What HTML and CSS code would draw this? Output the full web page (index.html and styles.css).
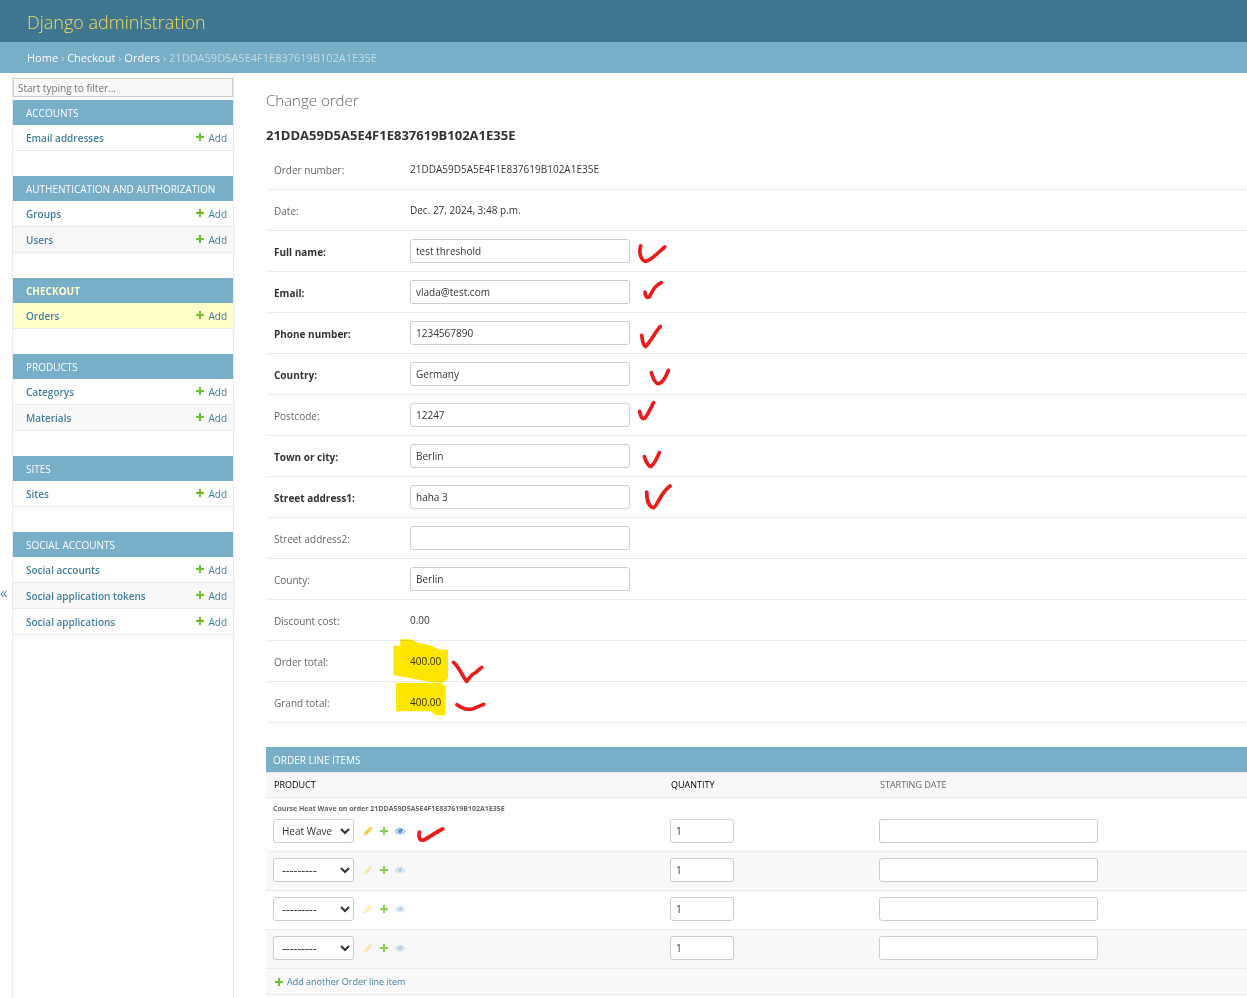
FILE: index.html
```
<!DOCTYPE html>
<html lang="en">
<head>
<meta charset="utf-8">
<meta name="viewport" content="width=device-width, initial-scale=1">
<title>Change order | Django administration</title>
<link rel="stylesheet" href="styles.css">
</head>
<body>
<svg class="sprite" aria-hidden="true">
  <symbol id="plus" viewBox="0 0 8 8"><path d="M3 0h2v3h3v2H5v3H3V5H0V3h3z" fill="#70bf2b"/></symbol>
  <symbol id="pencil" viewBox="0 0 1792 1792"><path fill="#efb80b" d="M491 1536l91-91-235-235-91 91v107h128v128h107zm523-928q0-22-22-22-10 0-17 7l-542 542q-7 7-7 17 0 22 22 22 10 0 17-7l542-542q7-7 7-17zm-54-192l416 416-832 832h-416v-416zm683 96q0 53-37 90l-166 166-416-416 166-165q36-38 90-38 53 0 91 38l235 234q37 39 37 91z"/></symbol>
  <symbol id="eye" viewBox="0 0 1792 1792"><path fill="#2b70bf" d="M1664 960q-152-236-381-353 61 104 61 225 0 185-131.5 316.5t-316.5 131.5-316.5-131.5-131.5-316.5q0-121 61-225-229 117-381 353 133 205 333.5 326.5t434.5 121.5 434.5-121.5 333.5-326.5zm-720-384q0-20-14-34t-34-14q-125 0-214.5 89.5t-89.5 214.5q0 20 14 34t34 14 34-14 14-34q0-86 61-147t147-61q20 0 34-14t14-34zm848 384q0 34-20 69-140 230-376.5 368.5t-499.5 138.5-499.5-139-376.5-368q-20-35-20-69t20-69q140-229 376.5-368t499.5-139 499.5 139 376.5 368q20 35 20 69z"/></symbol>
</svg>

<header class="header"><a class="site-name" href="#">Django administration</a></header>
<nav class="breadcrumbs" aria-label="Breadcrumbs">
  <a href="#">Home</a> › <a href="#">Checkout</a> › <a href="#">Orders</a> › 21DDA59D5A5E4F1E837619B102A1E35E
</nav>

<div class="main">
  <button class="nav-toggle" type="button" aria-label="Toggle navigation">«</button>
  <nav class="sidebar" aria-label="Sidebar">
    <input class="nav-filter" type="search" placeholder="Start typing to filter..." aria-label="Filter navigation items">
    <section class="module">
      <h2><a href="#">Accounts</a></h2>
      <ul>
        <li><a class="model" href="#">Email addresses</a><a class="add" href="#"><svg class="plus"><use href="#plus"/></svg>Add</a></li>
      </ul>
    </section>
    <section class="module">
      <h2><a href="#">Authentication and Authorization</a></h2>
      <ul>
        <li><a class="model" href="#">Groups</a><a class="add" href="#"><svg class="plus"><use href="#plus"/></svg>Add</a></li>
        <li><a class="model" href="#">Users</a><a class="add" href="#"><svg class="plus"><use href="#plus"/></svg>Add</a></li>
      </ul>
    </section>
    <section class="module current">
      <h2><a href="#">Checkout</a></h2>
      <ul>
        <li><a class="model" href="#">Orders</a><a class="add" href="#"><svg class="plus"><use href="#plus"/></svg>Add</a></li>
      </ul>
    </section>
    <section class="module">
      <h2><a href="#">Products</a></h2>
      <ul>
        <li><a class="model" href="#">Categorys</a><a class="add" href="#"><svg class="plus"><use href="#plus"/></svg>Add</a></li>
        <li><a class="model" href="#">Materials</a><a class="add" href="#"><svg class="plus"><use href="#plus"/></svg>Add</a></li>
      </ul>
    </section>
    <section class="module">
      <h2><a href="#">Sites</a></h2>
      <ul>
        <li><a class="model" href="#">Sites</a><a class="add" href="#"><svg class="plus"><use href="#plus"/></svg>Add</a></li>
      </ul>
    </section>
    <section class="module">
      <h2><a href="#">Social Accounts</a></h2>
      <ul>
        <li><a class="model" href="#">Social accounts</a><a class="add" href="#"><svg class="plus"><use href="#plus"/></svg>Add</a></li>
        <li><a class="model" href="#">Social application tokens</a><a class="add" href="#"><svg class="plus"><use href="#plus"/></svg>Add</a></li>
        <li><a class="model" href="#">Social applications</a><a class="add" href="#"><svg class="plus"><use href="#plus"/></svg>Add</a></li>
      </ul>
    </section>
  </nav>

  <main class="content">
    <h1>Change order</h1>
    <h2 class="object-name">21DDA59D5A5E4F1E837619B102A1E35E</h2>
    <form>
      <div class="fields">
        <div class="row"><span class="label">Order number:</span><span class="readonly">21DDA59D5A5E4F1E837619B102A1E35E</span></div>
        <div class="row"><span class="label">Date:</span><span class="readonly">Dec. 27, 2024, 3:48 p.m.</span></div>
        <div class="row"><label class="label required" for="name">Full name:</label><input class="text" id="name" type="text" value="test threshold">
          <svg class="mark" viewBox="0 3 180 123"><path d="M32 48C26 66 32 92 48 94C62 92 84 68 104 51"/></svg></div>
        <div class="row"><label class="label required" for="email">Email:</label><input class="text" id="email" type="email" value="vlada@test.com">
          <svg class="mark" viewBox="0 126 180 123"><path d="M45 186C47 206 56 206 62 194C70 178 74 168 94 158"/></svg></div>
        <div class="row"><label class="label required" for="phone">Phone number:</label><input class="text" id="phone" type="text" value="1234567890">
          <svg class="mark" viewBox="0 249 180 123"><path d="M35 316C37 332 41 346 46 350C58 340 72 312 91 289"/></svg></div>
        <div class="row"><label class="label required" for="country">Country:</label><input class="text" id="country" type="text" value="Germany">
          <svg class="mark" viewBox="0 372 180 123"><path d="M64 428C70 448 78 462 86 461C96 458 108 440 115 421"/></svg></div>
        <div class="row"><label class="label" for="postcode">Postcode:</label><input class="text" id="postcode" type="text" value="12247">
          <svg class="mark" viewBox="0 495 180 123"><path d="M29 544C31 560 36 568 44 565C52 556 60 538 71 518"/></svg></div>
        <div class="row"><label class="label required" for="town">Town or city:</label><input class="text" id="town" type="text" value="Berlin">
          <svg class="mark" viewBox="0 618 180 123"><path d="M43 680C48 696 56 710 63 709C72 704 80 686 88 668"/></svg></div>
        <div class="row"><label class="label required" for="street1">Street address1:</label><input class="text" id="street1" type="text" value="haha 3">
          <svg class="mark" viewBox="0 741 180 123"><path d="M50 786C50 812 58 830 70 833C82 830 88 792 120 768"/></svg></div>
        <div class="row"><label class="label" for="street2">Street address2:</label><input class="text" id="street2" type="text"></div>
        <div class="row"><label class="label" for="county">County:</label><input class="text" id="county" type="text" value="Berlin"></div>
        <div class="row"><span class="label">Discount cost:</span><span class="readonly">0.00</span></div>
        <div class="row"><span class="label">Order total:</span><span class="readonly">400.00</span>
          <svg class="mark totals" viewBox="0 0 390 390">
            <path class="highlight" d="M61 118H93L115 129L150 135L178 149H204V236L188 248L150 246L115 239L40 225V137H61ZM48 249H182L197 259V346H168L152 334H48Z"/>
            <path d="M221 187C240 204 248 232 260 244C270 232 276 222 284 220L305 202M231 314C250 328 266 330 280 326L311 313"/>
          </svg></div>
        <div class="row"><span class="label">Grand total:</span><span class="readonly">400.00</span></div>
      </div>

      <section class="inline-group">
        <h2>Order line items</h2>
        <table>
          <thead><tr><th class="product required">Product</th><th class="quantity required">Quantity</th><th>Starting date</th></tr></thead>
          <tbody>
            <tr>
              <td><p class="original">Course Heat Wave on order 21DDA59D5A5E4F1E837619B102A1E35E</p>
                <div class="related"><select aria-label="Product 1"><option>Heat Wave</option></select>
                  <a href="#" aria-label="Change"><svg><use href="#pencil"/></svg></a><a href="#" aria-label="Add"><svg class="plus"><use href="#plus"/></svg></a><a href="#" aria-label="View"><svg><use href="#eye"/></svg></a>
                  <svg class="item-mark" viewBox="471 237 84 72"><path d="M478 276C474 298 482 302 492 300C508 292 528 276 548 267"/></svg></div></td>
              <td class="low"><input class="text" type="text" value="1" aria-label="Quantity 1"></td>
              <td class="low"><input class="text" type="text" aria-label="Starting date 1"></td>
            </tr>
            <tr>
              <td><div class="related empty"><select aria-label="Product 2"><option>---------</option></select>
                  <a href="#" aria-label="Change"><svg><use href="#pencil"/></svg></a><a href="#" aria-label="Add"><svg class="plus"><use href="#plus"/></svg></a><a href="#" aria-label="View"><svg><use href="#eye"/></svg></a></div></td>
              <td><input class="text" type="text" value="1" aria-label="Quantity 2"></td>
              <td><input class="text" type="text" aria-label="Starting date 2"></td>
            </tr>
            <tr>
              <td><div class="related empty"><select aria-label="Product 3"><option>---------</option></select>
                  <a href="#" aria-label="Change"><svg><use href="#pencil"/></svg></a><a href="#" aria-label="Add"><svg class="plus"><use href="#plus"/></svg></a><a href="#" aria-label="View"><svg><use href="#eye"/></svg></a></div></td>
              <td><input class="text" type="text" value="1" aria-label="Quantity 3"></td>
              <td><input class="text" type="text" aria-label="Starting date 3"></td>
            </tr>
            <tr>
              <td><div class="related empty"><select aria-label="Product 4"><option>---------</option></select>
                  <a href="#" aria-label="Change"><svg><use href="#pencil"/></svg></a><a href="#" aria-label="Add"><svg class="plus"><use href="#plus"/></svg></a><a href="#" aria-label="View"><svg><use href="#eye"/></svg></a></div></td>
              <td><input class="text" type="text" value="1" aria-label="Quantity 4"></td>
              <td><input class="text" type="text" aria-label="Starting date 4"></td>
            </tr>
          </tbody>
        </table>
        <div class="add-row"><a href="#"><svg class="plus"><use href="#plus"/></svg>Add another Order line item</a></div>
      </section>
    </form>
  </main>
</div>
</body>
</html>
```
FILE: styles.css
```
* { box-sizing: border-box; }
body {
  margin: 0;
  min-height: 100vh;
  display: flex;
  flex-direction: column;
  background: #fff;
  color: #333;
  font: 10px/14px "Segoe UI", "Open Sans", "Noto Sans", sans-serif;
}
h1, h2, p, ul { margin: 0; padding: 0; }
a { color: #447e9b; text-decoration: none; }
input, select { font: inherit; color: #333; }
svg { display: block; width: 10px; height: 10px; flex: none; }
.sprite { position: absolute; width: 0; height: 0; }
.plus { width: 8px; height: 8px; }

.header { display: flex; padding: 10px 27px 8px; background: #417690; line-height: 24px; }
.site-name { color: #f5dd5d; font-size: 18px; font-weight: 300; }
.breadcrumbs { padding: 8px 27px; background: #79aec8; color: #c4dce8; font-size: 11px; line-height: 15px; }
.breadcrumbs a { color: #fff; font-weight: 500; }

.main { flex: 1; display: flex; }
.nav-toggle {
  width: 13px;
  padding: 112px 0 0;
  border: 0;
  border-right: 1px solid #eaeaea;
  background: #fff;
  color: #447e9b;
  font: 15px/20px "Segoe UI", "Open Sans", "Noto Sans", sans-serif;
  text-align: left;
}
.sidebar { flex: 0 0 221px; padding-top: 5px; border-right: 1px solid #eaeaea; }
.nav-filter {
  display: block;
  width: 100%;
  height: 19px;
  margin-bottom: 3px;
  padding: 1px 4px 0;
  border: 1px solid #ccc;
  border-radius: 0;
  background: #f8f8f8;
  appearance: none;
}
.nav-filter::placeholder { color: #757575; }
.module { margin-bottom: 25px; }
.module h2 { padding: 6px 13px 5px; background: #79aec8; font-size: 10px; font-weight: 400; text-transform: uppercase; }
.module h2 a { color: #fff; }
.module ul { list-style: none; }
.module li { display: flex; justify-content: space-between; padding: 6px 6px 5px 13px; border-bottom: 1px solid #eaeaea; }
.module li:nth-child(even) { background: #f8f8f8; }
.model { font-weight: 600; }
.add { display: flex; gap: 4px; }
.add .plus { margin-top: 2px; }
.current h2 { font-weight: 700; }
.current h2 a { color: #ffc; }
.current li { background: #ffc; }

.content { flex: 1; min-width: 0; padding: 17px 0 0 32px; }
h1 { color: #666; font-size: 15px; font-weight: 300; line-height: 20px; }
.object-name { padding: 16px 0 5px; font-size: 13px; line-height: 18px; }
.row { position: relative; display: flex; padding: 8px; border-bottom: 1px solid #eaeaea; }
.label { width: 136px; padding-top: 6px; color: #666; line-height: 14px; }
.label.required { color: #333; font-weight: 700; }
.readonly { padding: 5px 0; }
.text { height: 24px; padding: 1px 5px; border: 1px solid #ccc; border-radius: 3px; background: #fff; }
.row .text { width: 220px; }

/* Pen strokes drawn over the form */
.mark { position: absolute; top: 0; left: 364px; width: 60px; height: 41px; z-index: 1; pointer-events: none; mix-blend-mode: multiply; }
.mark path, .item-mark path { fill: none; stroke: #e81c1c; stroke-width: 11; stroke-linecap: round; stroke-linejoin: round; }
.totals { top: -41px; left: 114px; width: 130px; height: 130px; }
.mark .highlight { fill: #ffe600; stroke: none; }
.item-mark { width: 28px; height: 24px; margin-left: 6px; }

.inline-group { margin-top: 24px; }
.inline-group h2 { padding: 6px 7px 5px; background: #79aec8; color: #fff; font-size: 10px; font-weight: 400; text-transform: uppercase; }
table { width: 100%; border-collapse: separate; border-spacing: 0; table-layout: fixed; }
th { padding: 5px 8px; border: solid #eaeaea; border-width: 1px 0; background: #f8f8f8; color: #666; font-size: 9px; font-weight: 400; text-align: left; text-transform: uppercase; }
th.required { color: #000; }
.product { width: 397px; }
.quantity { width: 209px; }
td { padding: 6px 7px 8px; border-bottom: 1px solid #eaeaea; vertical-align: top; }
td.low { padding-top: 21px; }
td .text { display: block; width: 219px; }
td:nth-child(2) .text { width: 64px; }
tbody tr:nth-child(even) { background: #f8f8f8; }
.original { height: 15px; color: #666; font-size: 7px; font-weight: 700; line-height: 10px; }
.related { display: flex; align-items: center; gap: 6px; }
.related select { width: 81px; height: 24px; margin-right: 3px; padding: 0 4px; border: 1px solid #ccc; border-radius: 3px; background: #fff; font-size: 10px; }
.related.empty select { font-size: 12px; }
.related a { display: flex; justify-content: center; width: 10px; opacity: .8; }
.empty a:nth-of-type(odd) { opacity: .3; }
.add-row { padding: 6px 9px 5px; border-bottom: 1px solid #eaeaea; background: #f8f8f8; }
.add-row a { display: flex; align-items: center; gap: 4px; font-size: 9px; line-height: 14px; }
```
